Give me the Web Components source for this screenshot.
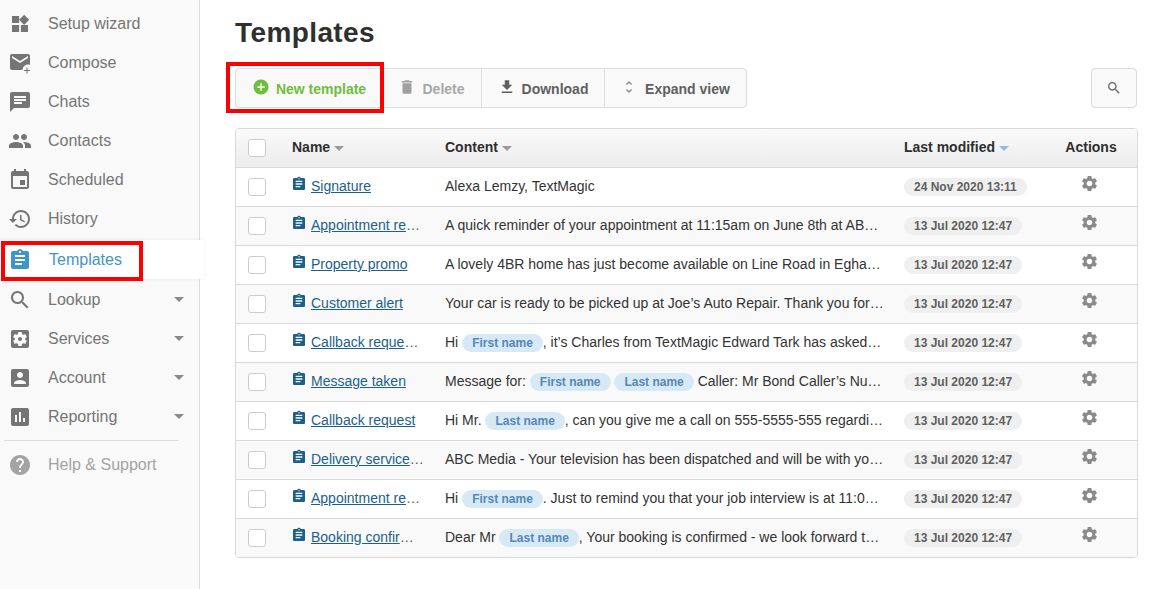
<!DOCTYPE html>
<html>
<head>
<meta charset="utf-8">
<title>Templates</title>
<style>
  html, body { margin: 0; height: 100%; background: #fff; font-family: "Liberation Sans", Arial, sans-serif; overflow: hidden; }
</style>
</head>
<body>
<app-shell>
  <side-nav slot="nav">
    <nav-item icon="widgets" label="Setup wizard"></nav-item>
    <nav-item icon="compose" label="Compose"></nav-item>
    <nav-item icon="chat" label="Chats"></nav-item>
    <nav-item icon="people" label="Contacts"></nav-item>
    <nav-item icon="event" label="Scheduled"></nav-item>
    <nav-item icon="history" label="History"></nav-item>
    <nav-item icon="assignment" label="Templates" active></nav-item>
    <nav-item icon="search" label="Lookup" caret></nav-item>
    <nav-item icon="services" label="Services" caret></nav-item>
    <nav-item icon="account" label="Account" caret></nav-item>
    <nav-item icon="reporting" label="Reporting" caret></nav-item>
    <nav-item icon="help" label="Help &amp; Support" muted></nav-item>
  </side-nav>
  <templates-page>
    <tool-bar slot="toolbar">
      <tool-button icon="add" label="New template" kind="add"></tool-button>
      <tool-button icon="delete" label="Delete" kind="off"></tool-button>
      <tool-button icon="download" label="Download"></tool-button>
      <tool-button icon="unfold" label="Expand view" kind="thin"></tool-button>
    </tool-bar>
    <template-table slot="table">
      <template-row name="Signature" modified="24 Nov 2020 13:11">Alexa Lemzy, TextMagic</template-row>
      <template-row name="Appointment re" cut modified="13 Jul 2020 12:47">A quick reminder of your appointment at 11:15am on June 8th at AB…</template-row>
      <template-row name="Property promo" modified="13 Jul 2020 12:47">A lovely 4BR home has just become available on Line Road in Egha…</template-row>
      <template-row name="Customer alert" modified="13 Jul 2020 12:47">Your car is ready to be picked up at Joe’s Auto Repair. Thank you for…</template-row>
      <template-row name="Callback reque" cut modified="13 Jul 2020 12:47">Hi <var-chip>First name</var-chip>, it’s Charles from TextMagic Edward Tark has asked…</template-row>
      <template-row name="Message taken" modified="13 Jul 2020 12:47">Message for: <var-chip>First name</var-chip> <var-chip>Last name</var-chip> Caller: Mr Bond Caller’s Nu…</template-row>
      <template-row name="Callback request" modified="13 Jul 2020 12:47">Hi Mr. <var-chip>Last name</var-chip>, can you give me a call on 555-5555-555 regardi…</template-row>
      <template-row name="Delivery service" cut modified="13 Jul 2020 12:47">ABC Media - Your television has been dispatched and will be with yo…</template-row>
      <template-row name="Appointment re" cut modified="13 Jul 2020 12:47">Hi <var-chip>First name</var-chip>. Just to remind you that your job interview is at 11:0…</template-row>
      <template-row name="Booking confir" cut modified="13 Jul 2020 12:47">Dear Mr <var-chip>Last name</var-chip>, Your booking is confirmed - we look forward t…</template-row>
    </template-table>
  </templates-page>
</app-shell>

<script>
const ICONS = {
  widgets: 'M13 13v8h8v-8h-8zM3 21h8v-8H3v8zM3 3v8h8V3H3zm13.66-1.31L11 7.34 16.66 13l5.66-5.66-5.66-5.65z',
  compose: 'M20 3H4c-1.1 0-2 .9-2 2v12c0 1.1.9 2 2 2h10.5c0-3 2.5-5.5 5.5-5.5.7 0 1.4.1 2 .4V5c0-1.1-.9-2-2-2zm0 4l-8 5-8-5V5l8 5 8-5v2zM18.5 16.5h1V19H22v1h-2.5v2.5h-1V20H16v-1h2.5z',
  chat: 'M20 2H4c-1.1 0-1.99.9-1.99 2L2 22l4-4h14c1.1 0 2-.9 2-2V4c0-1.1-.9-2-2-2zM6 9h12v2H6V9zm8 5H6v-2h8v2zm4-6H6V6h12v2z',
  people: 'M16 11c1.66 0 2.99-1.34 2.99-3S17.66 5 16 5c-1.66 0-3 1.34-3 3s1.34 3 3 3zm-8 0c1.66 0 2.99-1.34 2.99-3S9.66 5 8 5C6.34 5 5 6.34 5 8s1.34 3 3 3zm0 2c-2.33 0-7 1.17-7 3.5V19h14v-2.5c0-2.33-4.67-3.5-7-3.5zm8 0c-.29 0-.62.02-.97.05 1.16.84 1.97 1.97 1.97 3.45V19h6v-2.5c0-2.33-4.67-3.5-7-3.5z',
  event: 'M17 12h-5v5h5v-5zM16 1v2H8V1H6v2H5c-1.11 0-1.99.9-1.99 2L3 19c0 1.1.89 2 2 2h14c1.1 0 2-.9 2-2V5c0-1.1-.9-2-2-2h-1V1h-2zm3 18H5V8h14v11z',
  history: 'M13 3c-4.97 0-9 4.03-9 9H1l3.89 3.89.07.14L9 12H6c0-3.87 3.13-7 7-7s7 3.13 7 7-3.13 7-7 7c-1.93 0-3.68-.79-4.94-2.06l-1.42 1.42C8.27 19.99 10.51 21 13 21c4.97 0 9-4.03 9-9s-4.03-9-9-9zm-1 5v5l4.28 2.54.72-1.21-3.5-2.08V8H12z',
  assignment: 'M19 3h-4.18C14.4 1.84 13.3 1 12 1c-1.3 0-2.4.84-2.82 2H5c-1.1 0-2 .9-2 2v14c0 1.1.9 2 2 2h14c1.1 0 2-.9 2-2V5c0-1.1-.9-2-2-2zm-7 0c.55 0 1 .45 1 1s-.45 1-1 1-1-.45-1-1 .45-1 1-1zm2 14H7v-2h7v2zm3-4H7v-2h10v2zm0-4H7V7h10v2z',
  search: 'M15.5 14h-.79l-.28-.27C15.41 12.59 16 11.11 16 9.5 16 5.91 13.09 3 9.5 3S3 5.91 3 9.5 5.91 16 9.5 16c1.61 0 3.09-.59 4.23-1.57l.27.28v.79l5 4.99L20.49 19l-4.99-5zm-6 0C7.01 14 5 11.99 5 9.5S7.01 5 9.5 5 14 7.01 14 9.5 11.99 14 9.5 14z',
  services: 'M12 10c-1.1 0-2 .9-2 2s.9 2 2 2 2-.9 2-2-.9-2-2-2zm7-7H5c-1.11 0-2 .9-2 2v14c0 1.1.89 2 2 2h14c1.11 0 2-.9 2-2V5c0-1.1-.89-2-2-2zm-1.75 9c0 .23-.02.46-.05.68l1.48 1.16c.13.11.17.3.08.45l-1.4 2.42c-.09.15-.27.21-.43.15l-1.74-.7c-.36.28-.76.51-1.18.69l-.26 1.85c-.03.17-.18.3-.35.3h-2.8c-.17 0-.32-.13-.35-.29l-.26-1.85c-.43-.18-.82-.41-1.18-.69l-1.74.7c-.16.06-.34 0-.43-.15l-1.4-2.42c-.09-.15-.05-.34.08-.45l1.48-1.16c-.03-.23-.05-.46-.05-.69 0-.23.02-.46.05-.68l-1.48-1.16c-.13-.11-.17-.3-.08-.45l1.4-2.42c.09-.15.27-.21.43-.15l1.74.7c.36-.28.76-.51 1.18-.69l.26-1.85c.03-.17.18-.3.35-.3h2.8c.17 0 .32.13.35.29l.26 1.85c.43.18.82.41 1.18.69l1.74-.7c.16-.06.34 0 .43.15l1.4 2.42c.09.15.05.34-.08.45l-1.48 1.16c.03.23.05.46.05.69z',
  account: 'M3 5v14c0 1.1.89 2 2 2h14c1.1 0 2-.9 2-2V5c0-1.1-.9-2-2-2H5c-1.11 0-2 .9-2 2zm12 4c0 1.66-1.34 3-3 3s-3-1.34-3-3 1.34-3 3-3 3 1.34 3 3zm-9 8c0-2 4-3.1 6-3.1s6 1.1 6 3.1v1H6v-1z',
  reporting: 'M19 3H5c-1.1 0-2 .9-2 2v14c0 1.1.9 2 2 2h14c1.1 0 2-.9 2-2V5c0-1.1-.9-2-2-2zM9 17H7v-7h2v7zm4 0h-2V7h2v10zm4 0h-2v-4h2v4z',
  help: 'M12 2C6.48 2 2 6.48 2 12s4.48 10 10 10 10-4.48 10-10S17.52 2 12 2zm1 17h-2v-2h2v2zm2.07-7.75l-.9.92C13.45 12.9 13 13.5 13 15h-2v-.5c0-1.1.45-2.1 1.17-2.83l1.24-1.26c.37-.36.59-.86.59-1.41 0-1.1-.9-2-2-2s-2 .9-2 2H8c0-2.21 1.79-4 4-4s4 1.79 4 4c0 .88-.36 1.68-.93 2.25z',
  add: 'M12 2C6.48 2 2 6.48 2 12s4.48 10 10 10 10-4.48 10-10S17.52 2 12 2zm5 11h-4v4h-2v-4H7v-2h4V7h2v4h4v2z',
  delete: 'M6 19c0 1.1.9 2 2 2h8c1.1 0 2-.9 2-2V7H6v12zM19 4h-3.5l-1-1h-5l-1 1H5v2h14V4z',
  download: 'M19 9h-4V3H9v6H5l7 7 7-7zM5 18v2h14v-2H5z',
  unfold: 'M12 5.83L15.17 9l1.41-1.41L12 3 7.41 7.59 8.83 9 12 5.83zm0 12.34L8.83 15l-1.41 1.41L12 21l4.59-4.59L15.17 15 12 18.17z',
  gear: 'M19.14 12.94c.04-.3.06-.61.06-.94 0-.32-.02-.64-.07-.94l2.03-1.58c.18-.14.23-.41.12-.61l-1.92-3.32c-.12-.22-.37-.29-.59-.22l-2.39.96c-.5-.38-1.03-.7-1.62-.94l-.36-2.54c-.04-.24-.24-.41-.48-.41h-3.84c-.24 0-.43.17-.47.41l-.36 2.54c-.59.24-1.13.57-1.62.94l-2.39-.96c-.22-.08-.47 0-.59.22L2.74 8.87c-.12.21-.08.47.12.61l2.03 1.58c-.05.3-.09.63-.09.94s.02.64.07.94l-2.03 1.58c-.18.14-.23.41-.12.61l1.92 3.32c.12.22.37.29.59.22l2.39-.96c.5.38 1.03.7 1.62.94l.36 2.54c.05.24.24.41.48.41h3.84c.24 0 .44-.17.47-.41l.36-2.54c.59-.24 1.13-.56 1.62-.94l2.39.96c.22.08.47 0 .59-.22l1.92-3.32c.12-.22.07-.47-.12-.61l-2.01-1.58zM12 15.6c-1.98 0-3.6-1.62-3.6-3.6s1.62-3.6 3.6-3.6 3.6 1.62 3.6 3.6-1.62 3.6-3.6 3.6z'
};

function iconSvg(name, size, box) {
  const vb = box || '0 0 24 24';
  return `<svg width="${size}" height="${size}" viewBox="${vb}" fill="currentColor" style="display:block"><path d="${ICONS[name]}"/></svg>`;
}

class AppShell extends HTMLElement {
  constructor() {
    super();
    this.attachShadow({mode: 'open'});
    this.shadowRoot.innerHTML = `
      <style>
        :host { display: flex; height: 589px; }
        ::slotted(side-nav) { flex: 0 0 200px; }
      </style>
      <slot name="nav"></slot>
      <slot></slot>`;
  }
}
customElements.define('app-shell', AppShell);

class SideNav extends HTMLElement {
  constructor() {
    super();
    this.attachShadow({mode: 'open'});
    this.shadowRoot.innerHTML = `
      <style>
        :host { display: flex; flex-direction: column; box-sizing: border-box; width: 200px; height: 589px; padding-top: 4px; background: #f9f9f9; border-right: 1px solid #ddd; }
        ::slotted(nav-item[muted]) { margin-top: 9px; }
        ::slotted(nav-item[active]) { margin-top: 2px; margin-bottom: 1px; }
      </style>
      <slot></slot>`;
  }
}
customElements.define('side-nav', SideNav);

class NavItem extends HTMLElement {
  constructor() {
    super();
    this.attachShadow({mode: 'open'});
    const caret = this.hasAttribute('caret') ? '<span class="caret"></span>' : '';
    const mark = this.hasAttribute('active') ? '<span class="mark"></span>' : '';
    const boxes = {widgets: '-1.5 -1.5 27 27'};
    const icon = this.getAttribute('icon');
    this.shadowRoot.innerHTML = `
      <style>
        :host { display: flex; align-items: center; position: relative; height: 39px; padding-left: 8px; padding-right: 15px; font-size: 16px; color: #757575; box-sizing: border-box; }
        :host([active]) { margin-right: -5px; background: #fff; color: #3f95cb; z-index: 1; box-shadow: 0 0 3px rgba(0,0,0,.08); }
        :host([muted]) { color: #a3a3a3; }
        :host([muted])::before { content: ""; position: absolute; left: 4px; width: 175px; top: -5px; border-top: 1px solid #ddd; }
        .ico { flex: 0 0 24px; height: 24px; }
        .lbl { margin-left: 16px; flex: 1; white-space: nowrap; }
        :host([active]) .lbl { margin-left: 17px; }
        .caret { width: 0; height: 0; border: 5px solid transparent; border-top: 5px solid #8a8a8a; border-bottom: 0; }
        /* red annotation round the active entry */
        .mark { position: absolute; left: 1px; top: 1px; width: 142px; height: 40px; box-sizing: border-box; border: 4px solid #f00; }
      </style>
      <span class="ico">${iconSvg(icon, 24, boxes[icon])}</span>
      <span class="lbl">${this.getAttribute('label').replace('&', '&amp;')}</span>
      ${caret}${mark}`;
  }
}
customElements.define('nav-item', NavItem);

class TemplatesPage extends HTMLElement {
  constructor() {
    super();
    this.attachShadow({mode: 'open'});
    this.shadowRoot.innerHTML = `
      <style>
        :host { display: block; flex: 1; min-width: 0; padding: 16px 33px 0 35px; color: #2e2e2e; }
        h1 { margin: 0; font-size: 28px; line-height: 34px; font-weight: bold; color: #2f2f2f; letter-spacing: .4px; }
        .bar { display: flex; justify-content: space-between; align-items: flex-start; margin-top: 18px; margin-bottom: 20px; }
        .search { width: 46px; height: 40px; box-sizing: border-box; border: 1px solid #d9d9d9; border-radius: 4px; background: #f9f9f9; color: #666; display: flex; align-items: center; justify-content: center; }
      </style>
      <h1>Templates</h1>
      <div class="bar">
        <slot name="toolbar"></slot>
        <div class="search">${iconSvg('search', 16)}</div>
      </div>
      <slot name="table"></slot>`;
  }
}
customElements.define('templates-page', TemplatesPage);

class ToolBar extends HTMLElement {
  constructor() {
    super();
    this.attachShadow({mode: 'open'});
    this.shadowRoot.innerHTML = `
      <style>
        :host { display: flex; position: relative; height: 40px; box-sizing: border-box; border: 1px solid #ddd; border-radius: 4px; background: #f9f9f9; }
        ::slotted(tool-button:not(:first-child)) { border-left: 1px solid #ddd; }
        ::slotted(tool-button[kind="off"]) { border-left: 0; }
        .mark { position: absolute; left: -10px; top: -7px; width: 158px; height: 51px; box-sizing: border-box; border: 4px solid #f00; pointer-events: none; }
      </style>
      <slot></slot>
      <span class="mark"></span>`;
  }
}
customElements.define('tool-bar', ToolBar);

class ToolButton extends HTMLElement {
  constructor() {
    super();
    this.attachShadow({mode: 'open'});
    const k = this.getAttribute('kind');
    const label = this.getAttribute('label');
    const widths = {'New template': 146, 'Delete': 99, 'Download': 123, 'Expand view': 142};
    const color = k === 'add' ? '#6fbd3f' : k === 'off' ? '#a8a8a8' : '#5f5f5f';
    const iconColor = k === 'add' ? '#6fbd3f' : k === 'off' ? '#a0a0a0' : k === 'thin' ? '#8c8c8c' : '#5f5f5f';
    const size = k === 'thin' ? 16 : 18;
    const gap = k === 'thin' ? 8 : 6;
    this.shadowRoot.innerHTML = `
      <style>
        :host { display: flex; align-items: center; justify-content: center; box-sizing: border-box; width: ${widths[label]}px; font-size: 14px; font-weight: bold; color: ${color}; }
        .i { color: ${iconColor}; margin-right: ${gap}px; margin-top: -3px; }
        .t { padding-top: 2px; }
      </style>
      <span class="i">${iconSvg(this.getAttribute('icon'), size)}</span>
      <span class="t">${label}</span>`;
  }
}
customElements.define('tool-button', ToolButton);

const COLS = '56px 153px 459px 146px 1fr';

class TemplateTable extends HTMLElement {
  constructor() {
    super();
    this.attachShadow({mode: 'open'});
    this.shadowRoot.innerHTML = `
      <style>
        :host { display: block; box-sizing: border-box; width: 903px; border: 1px solid #d9d9d9; border-radius: 4px; font-size: 14px; overflow: hidden; }
        .head { display: grid; grid-template-columns: ${COLS}; height: 38px; align-items: center; background: linear-gradient(#fafafa, #ececec); font-weight: bold; color: #2e2e2e; }
        .head > div:not(.box) { padding-bottom: 2px; }
        .box { width: 18px; height: 18px; box-sizing: border-box; margin-left: 12px; border: 1px solid #ccc; border-radius: 3px; background: #fff; }
        .sort::after { content: ""; display: inline-block; margin-left: 4px; vertical-align: 1px; border: 5px solid transparent; border-top: 5px solid #9a9a9a; border-bottom: 0; }
        .sort.on::after { border-top-color: #8fbce0; }
        .act { text-align: center; margin-right: 5px; }
      </style>
      <div class="head">
        <div class="box"></div>
        <div class="sort">Name</div>
        <div class="sort">Content</div>
        <div class="sort on">Last modified</div>
        <div class="act">Actions</div>
      </div>
      <slot></slot>`;
  }
}
customElements.define('template-table', TemplateTable);

class TemplateRow extends HTMLElement {
  constructor() {
    super();
    this.attachShadow({mode: 'open'});
    const dots = this.hasAttribute('cut') ? '…' : '';
    this.shadowRoot.innerHTML = `
      <style>
        :host { display: grid; grid-template-columns: ${COLS}; height: 39px; box-sizing: border-box; border-top: 1px solid #d9d9d9; align-items: center; background: #fff; color: #333; }
        :host(:nth-child(even)) { background: #f9f9f9; }
        .box { width: 18px; height: 18px; box-sizing: border-box; margin-left: 12px; border: 1px solid #ccc; border-radius: 3px; background: #fff; }
        .name { display: flex; align-items: center; padding-bottom: 2px; min-width: 0; }
        .name .i { flex: 0 0 16px; color: #1c5f8a; margin: -4px 4px 0 -1px; }
        .trunc { white-space: nowrap; color: #555; }
        a { color: #1c5f8a; text-decoration: underline; }
        .content { white-space: nowrap; padding-bottom: 2px; min-width: 0; color: #333; }
        .date { display: inline-block; padding: 0 10px; height: 18px; line-height: 18px; border-radius: 9px; background: #efefef; color: #5f5f5f; font-size: 12px; font-weight: bold; vertical-align: top; }
        .gear { color: #8a8a8a; justify-self: center; margin: -7px 9px 0 0; }
      </style>
      <div class="box"></div>
      <div class="name"><span class="i">${iconSvg('assignment', 16)}</span><div class="trunc"><a href="#">${this.getAttribute('name')}</a>${dots}</div></div>
      <div class="content"><slot></slot></div>
      <div><span class="date">${this.getAttribute('modified')}</span></div>
      <div class="gear">${iconSvg('gear', 19)}</div>`;
  }
}
customElements.define('template-row', TemplateRow);

class VarChip extends HTMLElement {
  constructor() {
    super();
    this.attachShadow({mode: 'open'});
    this.shadowRoot.innerHTML = `
      <style>
        :host { display: inline-block; height: 18px; line-height: 18px; margin: -3px 0; padding: 0 10px; border-radius: 9px; background: #d8e9f6; color: #5488b5; font-size: 12px; font-weight: bold; vertical-align: 0; }
      </style>
      <slot></slot>`;
  }
}
customElements.define('var-chip', VarChip);
</script>
</body>
</html>
